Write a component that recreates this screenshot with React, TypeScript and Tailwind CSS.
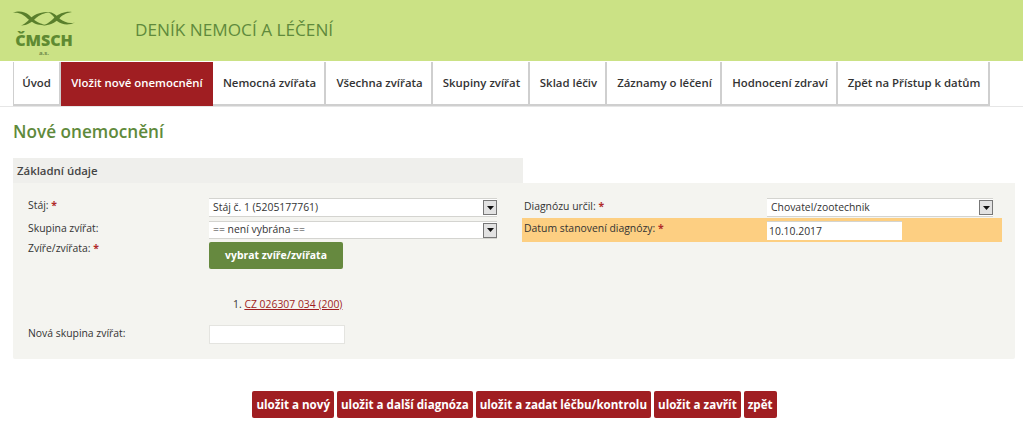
const tabs = [
  { label: 'Úvod', w: 'w-[48px] border-l' },
  { label: 'Vložit nové onemocnění', w: 'w-[152px] pl-[2px]', active: true },
  { label: 'Nemocná zvířata', w: 'w-[113px] pl-[2px]' },
  { label: 'Všechna zvířata', w: 'w-[107px] pl-[2px]' },
  { label: 'Skupiny zvířat', w: 'w-[97px] pl-[2px]' },
  { label: 'Sklad léčiv', w: 'w-[77px] pl-[2px]' },
  { label: 'Záznamy o léčení', w: 'w-[115px] pl-[2px]' },
  { label: 'Hodnocení zdraví', w: 'w-[116px] pl-[2px]' },
  { label: 'Zpět na Přístup k datům', w: 'w-[152px] pl-[2px]' },
];

const actions = ['uložit a nový', 'uložit a další diagnóza', 'uložit a zadat léčbu/kontrolu', 'uložit a zavřít', 'zpět'];

const Star = () => <span className="text-[#b02a2a] font-bold"> *</span>;

const Select = ({ value, width }: { value: string; width: string }) => (
  <div className={`${width} bg-white border-t border-b border-[#d4d4d0] flex items-center justify-between pl-[4px] text-[10.4px] text-[#333]`}>
    <span>{value}</span>
    <span className="w-[14px] h-[15px] bg-[#e2e2e2] border border-[#777] flex items-center justify-center">
      <svg width="7" height="4" viewBox="0 0 7 4"><path d="M0 0h7L3.5 4z" fill="#111" /></svg>
    </span>
  </div>
);

const Logo = () => (
  <div className="w-[66px] h-[61px] flex flex-col items-center pt-[9px] shrink-0">
    <svg width="66" height="20" viewBox="0 0 66 20" fill="#5a7f2c">
      <path d="M2 4C8 1 14 3 18 6C22 10 27 15 34 15.5C27 17 22 14 17 10C13 6 8 3 2 4Z" />
      <path d="M10 16.5C15 15 18 10 23 6.5C27 4 33 2.5 39 3C33 4 28 6 25 9C21 13 16 16.5 10 16.5Z" />
      <path d="M37 3C42 3 45 6 49 10C53 13 58 15 64 13.5C58 16.5 51 16 46 12C43 8 41 5 37 3Z" />
      <path d="M30 16.5C36 16 40 12 44 8C48 5 54 2 61 3C55 4 51 6 48 10C44 14 37 17 30 16.5Z" />
    </svg>
    <div className="mt-[2px] text-[16px] leading-[18px] font-extrabold text-[#5f8a32]">ČMSCH</div>
    <div className="text-[6px] leading-[8px] font-bold text-[#6f8a4a]">a.s.</div>
  </div>
);

const App = () => {
  return (
    <div className="w-[1023px] h-[424px] overflow-hidden bg-white font-['Open_Sans',sans-serif] text-[#333]">
      <header className="h-[61px] bg-[#cbe285] flex items-start pl-[11px]">
        <Logo />
        <h1 className="ml-[58px] mt-[18px] text-[17.2px] leading-[24px] font-normal text-[#5f8a3c]">DENÍK NEMOCÍ A LÉČENÍ</h1>
      </header>

      <nav className="h-[46px] pl-[13px] border-b border-[#e6e6e6] pt-[1px] flex items-start">
        {tabs.map((t) => (
          <a
            key={t.label}
            className={`${t.w} h-[44px] flex items-center justify-center text-[11.4px] font-semibold whitespace-nowrap border-b-2 border-r-2 ${t.active ? 'bg-[#a01e22] text-white border-[#a01e22]' : 'bg-white text-[#333] border-[#cfcfcf]'}`}
          >
            {t.label}
          </a>
        ))}
      </nav>

      <main className="pl-[13px] pr-[8px] pt-[13px]">
        <h2 className="text-[17.2px] leading-[24px] font-semibold text-[#5f8a3c]">Nové onemocnění</h2>

        <div className="mt-[14px] w-[510px] h-[25px] bg-[#efefec] pl-[4px] flex items-center text-[11.4px] font-semibold text-[#444]">Základní údaje</div>

        <section className="w-full h-[176px] bg-[#f4f4f0] rounded-b-[2px] flex pl-[15px] pt-[15px] text-[10.4px]">
          <div className="w-[494px] shrink-0">
            <div className="h-[23px] flex">
              <label className="w-[181px] leading-[14px]">Stáj:<Star /></label>
              <div className="h-[19px] flex"><Select value="Stáj č. 1 (5205177761)" width="w-[288px]" /></div>
            </div>
            <div className="h-[21px] flex">
              <label className="w-[181px] leading-[14px]">Skupina zvířat:</label>
              <div className="h-[18px] flex"><Select value="== není vybrána ==" width="w-[288px]" /></div>
            </div>
            <div className="flex">
              <label className="w-[181px] leading-[12px]">Zvíře/zvířata:<Star /></label>
              <button className="w-[134px] h-[27px] bg-[#66893f] text-white font-bold rounded-[2px]">vybrat zvíře/zvířata</button>
            </div>
            <div className="pl-[205px] mt-[27px] h-[29px] leading-[16px] whitespace-nowrap">
              1. <a className="text-[#a01e22] underline">CZ 026307 034 (200)</a>
            </div>
            <div className="flex items-start">
              <label className="w-[181px] leading-[16px]">Nová skupina zvířat:</label>
              <input className="w-[136px] h-[19px] bg-white border border-[#e4e4e0] outline-none" />
            </div>
          </div>

          <div className="w-[480px] shrink-0">
            <div className="h-[20px] flex pl-[2px]">
              <label className="w-[243px] leading-[16px]">Diagnózu určil:<Star /></label>
              <div className="h-[19px] flex"><Select value="Chovatel/zootechnik" width="w-[226px]" /></div>
            </div>
            <div className="h-[24px] bg-[#fdcf82] flex pl-[2px] pt-[3px]">
              <label className="w-[243px] leading-[14px]">Datum stanovení diagnózy:<Star /></label>
              <input defaultValue="10.10.2017" className="w-[135px] h-[19px] bg-white border-t border-[#d4d4d0] pl-[2px] text-[#333] outline-none" />
            </div>
          </div>
        </section>

        <div className="mt-[32px] flex justify-center gap-[3px] pl-[1px]">
          {actions.map((a) => (
            <button key={a} className="h-[27px] px-[4px] bg-[#a01e22] text-white text-[11.6px] font-bold rounded-[2px] whitespace-nowrap">{a}</button>
          ))}
        </div>
      </main>
    </div>
  );
};

export default App;
